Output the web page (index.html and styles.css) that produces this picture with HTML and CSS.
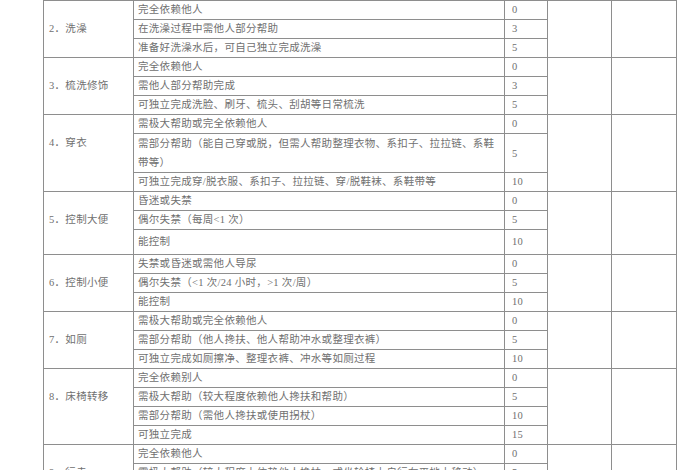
FILE: index.html
```html
<!DOCTYPE html>
<html lang="zh">
<head>
<meta charset="utf-8">
<link rel="stylesheet" href="styles.css">
</head>
<body>
<div class="sheet">
<table class="adl">
<colgroup>
<col class="c-item"><col class="c-desc"><col class="c-score"><col class="c-a"><col class="c-b">
</colgroup>
<tbody>
<tr><td></td><td class="desc">可独立进食（在合理的时间内独立进食准备好的食物）</td><td class="score">10</td><td></td><td></td></tr>

<tr><td class="item" rowspan="3">2．洗澡</td><td class="desc">完全依赖他人</td><td class="score">0</td><td rowspan="3"></td><td rowspan="3"></td></tr>
<tr><td class="desc">在洗澡过程中需他人部分帮助</td><td class="score">3</td></tr>
<tr><td class="desc">准备好洗澡水后，可自己独立完成洗澡</td><td class="score">5</td></tr>

<tr><td class="item" rowspan="3">3．梳洗修饰</td><td class="desc">完全依赖他人</td><td class="score">0</td><td rowspan="3"></td><td rowspan="3"></td></tr>
<tr><td class="desc">需他人部分帮助完成</td><td class="score">3</td></tr>
<tr><td class="desc">可独立完成洗脸、刷牙、梳头、刮胡等日常梳洗</td><td class="score">5</td></tr>

<tr><td class="item" rowspan="3">4．穿衣</td><td class="desc">需极大帮助或完全依赖他人</td><td class="score">0</td><td rowspan="3"></td><td rowspan="3"></td></tr>
<tr class="tall"><td class="desc">需部分帮助（能自己穿或脱，但需人帮助整理衣物、系扣子、拉拉链、系鞋带等）</td><td class="score">5</td></tr>
<tr><td class="desc">可独立完成穿/脱衣服、系扣子、拉拉链、穿/脱鞋袜、系鞋带等</td><td class="score">10</td></tr>

<tr><td class="item" rowspan="3">5．控制大便</td><td class="desc">昏迷或失禁</td><td class="score">0</td><td rowspan="3"></td><td rowspan="3"></td></tr>
<tr><td class="desc">偶尔失禁（每周&lt;1 次）</td><td class="score">5</td></tr>
<tr class="wide"><td class="desc">能控制</td><td class="score">10</td></tr>

<tr><td class="item" rowspan="3">6．控制小便</td><td class="desc">失禁或昏迷或需他人导尿</td><td class="score">0</td><td rowspan="3"></td><td rowspan="3"></td></tr>
<tr><td class="desc">偶尔失禁（&lt;1 次/24 小时，&gt;1 次/周）</td><td class="score">5</td></tr>
<tr><td class="desc">能控制</td><td class="score">10</td></tr>

<tr><td class="item" rowspan="3">7．如厕</td><td class="desc">需极大帮助或完全依赖他人</td><td class="score">0</td><td rowspan="3"></td><td rowspan="3"></td></tr>
<tr><td class="desc">需部分帮助（他人搀扶、他人帮助冲水或整理衣裤）</td><td class="score">5</td></tr>
<tr><td class="desc">可独立完成如厕擦净、整理衣裤、冲水等如厕过程</td><td class="score">10</td></tr>

<tr><td class="item" rowspan="4">8．床椅转移</td><td class="desc">完全依赖别人</td><td class="score">0</td><td rowspan="4"></td><td rowspan="4"></td></tr>
<tr><td class="desc">需极大帮助（较大程度依赖他人搀扶和帮助）</td><td class="score">5</td></tr>
<tr><td class="desc">需部分帮助（需他人搀扶或使用拐杖）</td><td class="score">10</td></tr>
<tr><td class="desc">可独立完成</td><td class="score">15</td></tr>

<tr><td class="item" rowspan="3">9．行走</td><td class="desc">完全依赖他人</td><td class="score">0</td><td rowspan="3"></td><td rowspan="3"></td></tr>
<tr><td class="desc">需极大帮助（较大程度上依赖他人搀扶，或坐轮椅上自行在平地上移动）</td><td class="score">5</td></tr>
<tr><td class="desc">需部分帮助（需他人搀扶或使用拐杖）</td><td class="score">10</td></tr>
</tbody>
</table>
</div>
</body>
</html>
```
FILE: styles.css
```css
html, body {
  margin: 0;
  padding: 0;
  background: #ffffff;
}
body {
  width: 700px;
  height: 470px;
  overflow: hidden;
  font-family: "Liberation Serif", "Noto Sans CJK SC", serif;
  color: #707070;
}
.sheet {
  margin: -19px 0 0 43px;
}
.adl {
  border-collapse: collapse;
  table-layout: fixed;
  width: 633px;
  font-size: 10.5px;
  letter-spacing: 0.3px;
}
.c-item { width: 90px; }
.c-desc { width: 371px; }
.c-score { width: 43px; }
.c-a { width: 64px; }
.c-b { width: 65px; }
.adl td {
  border: 1px solid #8e8e8e;
  padding: 0 0 0 4px;
  height: 18px;
  line-height: 18px;
  vertical-align: middle;
}
.adl tr.tall td { height: 37px; line-height: 19px; }
.adl tr.wide td { height: 24px; }
.adl td.item {
  vertical-align: top;
  padding: 18px 0 0 5px;
  line-height: 20px;
}
.adl td.desc {
  padding-left: 4px;
  padding-right: 4px;
}
.adl td.score {
  padding-left: 7px;
}
```
